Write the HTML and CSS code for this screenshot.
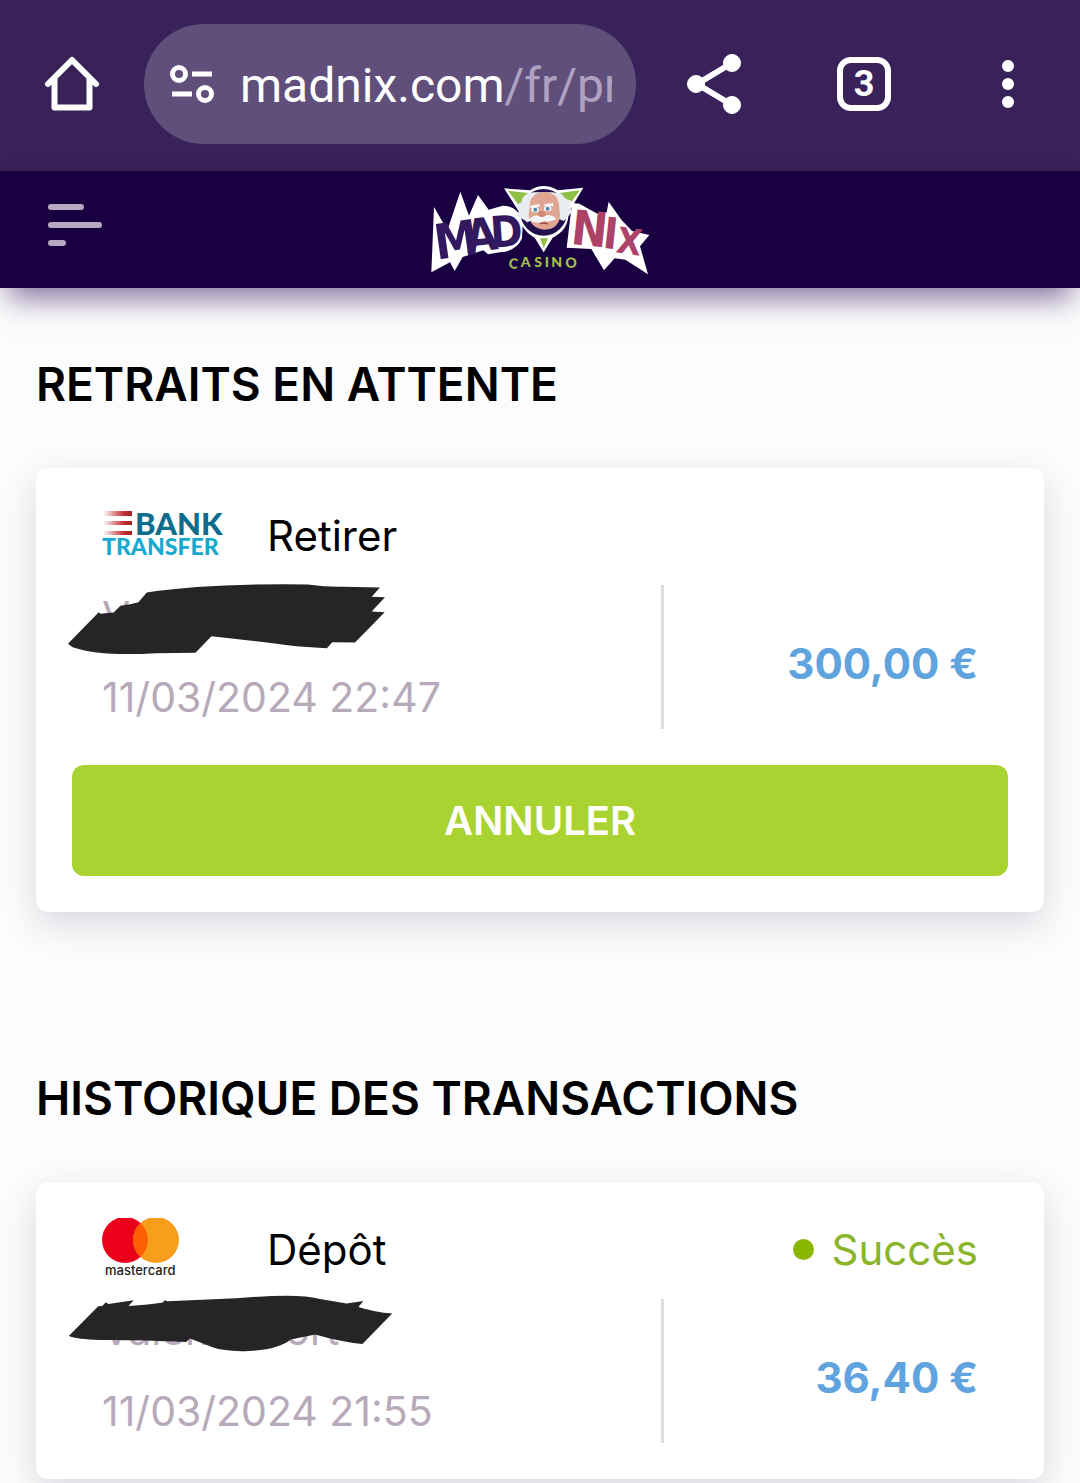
FILE: index.html
```html
<!DOCTYPE html>
<html lang="fr">
<head>
<meta charset="utf-8">
<meta name="viewport" content="width=device-width, initial-scale=1">
<title>Madnix Casino – Transactions</title>
<link rel="stylesheet" href="styles.css">
</head>
<body>
<div class="toolbar">
  <button class="tool home" type="button" aria-label="Accueil">
    <svg width="60" height="60" viewBox="0 0 60 60" fill="none" stroke="#fff" stroke-width="6" stroke-linejoin="round" stroke-linecap="round"><path d="M6 30 30 6l24 24M12.500 25v28.500h35V25"/></svg>
  </button>
  <button class="address" type="button">
    <svg class="tune" width="48" height="42" viewBox="0 0 48 42" fill="none" stroke="#fff" stroke-width="5"><circle cx="11" cy="11" r="6.500"/><path d="M24 11h20M4 31h20"/><circle cx="37" cy="31" r="6.500"/></svg>
    <span class="url">madnix.com<span class="path">/fr/pr</span></span>
  </button>
  <div class="actions">
    <button class="tool" type="button" aria-label="Partager">
      <svg width="60" height="60" viewBox="0 0 60 60" fill="#fff" stroke="#fff"><path d="M48 9 13 30l35 21" fill="none" stroke-width="6"/><circle cx="48" cy="9" r="8.500"/><circle cx="12" cy="30" r="8.500"/><circle cx="48" cy="51" r="8.500"/></svg>
    </button>
    <button class="tool" type="button" aria-label="Onglets ouverts"><span class="tabs">3</span></button>
    <button class="tool more" type="button" aria-label="Menu du navigateur">
      <svg width="12" height="48" viewBox="0 0 12 48" fill="#fff"><circle cx="6" cy="6" r="6"/><circle cx="6" cy="24" r="6"/><circle cx="6" cy="42" r="6"/></svg>
    </button>
  </div>
</div>

<header class="site-header">
  <button class="menu" type="button" aria-label="Menu"><span class="bar mid"></span><span class="bar"></span><span class="bar short"></span></button>
  <a class="logo" href="#" aria-label="Madnix Casino">
    <svg width="240" height="110" viewBox="0 0 720 330">
      <path fill="#fff" d="M42 96 82 166 121 50 147 122 174 60 206 104 248 92Q300 92 308 150L306 190Q290 228 240 232L204 238 190 226 128 246 104 288 90 262 34 292Z"/>
      <path fill="#fff" d="M440 218 456 84 478 86 532 116 560 112 566 80 604 134 636 168 688 180 660 214 684 298 616 254 584 250 552 286 514 222Z"/>
      <g class="logo-mad">
        <text x="50" y="254" font-size="146" transform="rotate(-8 50 254)">M</text>
        <text x="142" y="234" font-size="138" transform="rotate(-7 142 234)">A</text>
        <text x="214" y="218" font-size="130" transform="rotate(-4 214 218)">D</text>
      </g>
      <g class="logo-nix">
        <text x="450" y="206" font-size="144" transform="rotate(6 450 206)">N</text>
        <text x="546" y="218" font-size="130" transform="rotate(6 546 218)">I</text>
        <text x="586" y="232" font-size="108" transform="rotate(8 586 232)">X</text>
      </g>
      <path fill="#fff" d="M252 40 330 46Q370 20 414 46L490 38 446 112Q446 166 398 188L371 232 344 188Q298 164 298 112Z"/>
      <path fill="#8fbf45" d="M264 47 324 54 300 96ZM480 46 418 54 446 92ZM360 190H384L371 220Z"/>
      <circle cx="371" cy="112" r="70" fill="#22104e"/>
      <path fill="#e9edf2" d="M340 52Q304 56 304 82L286 92 298 106 290 122 308 132 322 142 344 132 410 130 432 138 446 122 456 110 448 96 456 78 438 72 424 56 398 52Z"/>
      <path fill="#e0a591" d="M330 80Q342 50 376 52 410 54 416 82L420 116Q420 162 374 164 330 162 326 118Z"/>
      <path fill="#f3f4f6" d="M326 134Q344 114 366 126 388 112 410 132 392 142 372 138 348 150 326 134ZM330 92 358 86 360 94 332 100ZM372 88 400 84 400 94 374 94Z"/>
      <ellipse cx="345" cy="104" rx="11" ry="8" fill="#fff"/><circle cx="346" cy="104" r="6" fill="#4b86ba"/>
      <ellipse cx="383" cy="101" rx="11" ry="8" fill="#fff"/><circle cx="383" cy="101" r="6" fill="#4b86ba"/>
      <ellipse cx="366" cy="117" rx="11" ry="9" fill="#cf8474"/>
      <path d="M360 147q12-5 24 0" fill="none" stroke="#8d3e42" stroke-width="4"/>
      <g class="logo-casino">
        <text x="265" y="279" transform="rotate(6 265 279)">C</text><text x="302" y="277">A</text><text x="343" y="276">S</text><text x="374" y="276">I</text><text x="394" y="277">N</text><text x="438" y="280" transform="rotate(-6 438 280)">O</text>
      </g>
    </svg>
  </a>
</header>

<main class="content">
  <section>
    <h2>Retraits en attente</h2>
    <article class="card">
      <div class="summary">
        <svg class="brand" width="120" height="50" viewBox="0 0 120 50" role="img" aria-label="Bank Transfer">
          <defs><linearGradient id="stripe"><stop stop-color="#c4343a" stop-opacity="0"/><stop offset=".7" stop-color="#c4343a"/><stop offset="1" stop-color="#a81f28"/></linearGradient></defs>
          <path fill="url(#stripe)" d="M1 0h29v5H1zM1 10h29v4H1zM1 20h29v4H1z"/>
          <text class="bank" x="33" y="24">BANK</text><text class="transfer" x="0" y="44">TRANSFER</text>
        </svg>
        <span class="kind">Retirer</span>
      </div>
      <div class="details">
        <div class="who"><p class="name">V</p><p><time datetime="2024-03-11T22:47">11/03/2024 22:47</time></p>
          <svg class="redact first" width="317" height="72" viewBox="26 280 950 215"><path fill="#252525" d="M26 462 118 367 123 372 163 368 183 348Q215 343 237 337L262 308Q450 280 745 284 800 292 850 291L961 293 936 321 976 322 936 365 975 367 886 458 818 457 802 475Q700 470 640 460L456 439 408 489 290 490Q120 500 40 472Z"/></svg>
        </div>
        <div class="amount">300,00 €</div>
      </div>
      <button class="cancel" type="button">Annuler</button>
    </article>
  </section>

  <section>
    <h2>Historique des transactions</h2>
    <article class="card">
      <div class="summary">
        <svg class="brand" width="120" height="63" viewBox="0 0 120 63" role="img" aria-label="Mastercard">
          <clipPath id="circles"><path d="M0 0h120v50H0z"/></clipPath>
          <g clip-path="url(#circles)"><circle cx="23" cy="22" r="23" fill="#eb001b"/><circle cx="54" cy="22" r="23" fill="#f79e1b"/><path fill="#ff5f00" d="M38.500 5a23 23 0 0 1 0 34 23 23 0 0 1 0-34Z"/></g>
          <text class="mastercard" x="3" y="57">mastercard</text>
        </svg>
        <span class="kind">Dépôt</span>
        <span class="status">Succès</span>
      </div>
      <div class="details">
        <div class="who"><p class="name"><span>Valen</span><span>ort</span></p><p><time datetime="2024-03-11T21:55">11/03/2024 21:55</time></p>
          <svg class="redact second" width="325" height="57" viewBox="26 284 976 172"><path fill="#252525" d="M26 408 115 318 127 317 138 306 145 311 222 300 206 317Q270 314 310 307L315 300 324 303Q430 298 530 294 720 278 780 295L864 310 915 302 900 320Q950 336 1002 340L912 432Q840 424 770 403L696 418Q660 448 570 453 500 456 460 442L392 415 380 426Q200 418 120 420 50 418 26 408Z"/></svg>
        </div>
        <div class="amount">36,40 €</div>
      </div>
    </article>
  </section>
</main>
</body>
</html>
```
FILE: styles.css
```css
* { box-sizing: border-box; }

body {
  margin: 0;
  background: #fcfcfc;
  color: #000;
  font: 42px/63px Inter, "Liberation Sans", sans-serif;
}

h2, p { margin: 0; }

button {
  margin: 0;
  padding: 0;
  border: 0;
  background: none;
  color: inherit;
  font: inherit;
  cursor: pointer;
}

svg { display: block; flex: none; overflow: visible; }

/* Browser toolbar */
.toolbar {
  display: flex;
  align-items: center;
  padding: 24px 0 27px;
  background: #382259;
  color: #fff;
}

.tool {
  display: flex;
  align-items: center;
  justify-content: center;
  flex: none;
  width: 144px;
  height: 120px;
}

.tool.more { width: 132px; }

.address {
  display: flex;
  align-items: center;
  gap: 24px;
  flex: 1;
  min-width: 0;
  height: 120px;
  padding: 0 24px;
  border-radius: 60px;
  background: #604f7a;
}

.url {
  flex: 1;
  min-width: 0;
  padding-top: 4px;
  overflow: hidden;
  white-space: nowrap;
  text-align: left;
  font: 48px/60px Roboto, sans-serif;
}

.path { color: #aea2c0; }

.actions { display: flex; gap: 6px; padding: 0 6px; }

.tabs {
  width: 54px;
  height: 54px;
  border: 6px solid #fff;
  border-radius: 14px;
  font: 700 36px/42px Roboto, sans-serif;
}

/* Site header */
.site-header {
  position: relative;
  display: grid;
  grid-template-columns: 1fr auto 1fr;
  align-items: center;
  height: 117px;
  padding: 0 48px;
  background: #190041;
  box-shadow: 0 18px 28px -8px rgba(50, 20, 95, .6);
}

.menu {
  display: flex;
  flex-direction: column;
  gap: 12px;
  width: 54px;
  padding-bottom: 9px;
}

.bar { width: 54px; height: 6px; border-radius: 3px; background: #b7a8c3; }
.bar.mid { width: 36px; }
.bar.short { width: 18px; }

.logo-mad, .logo-nix { font-family: "DejaVu Sans Condensed", "DejaVu Sans", sans-serif; font-weight: 700; }
.logo-mad { fill: #32185f; }
.logo-nix { fill: #ad4268; }
.logo-casino { fill: #a5c34a; font: 900 42px Lato, sans-serif; }

/* Transactions */
.content {
  display: grid;
  gap: 150px;
  padding: 60px 36px 4px;
}

h2 {
  margin-bottom: 48px;
  font-size: 46px;
  line-height: 72px;
  font-weight: 600;
  text-transform: uppercase;
}

.card {
  padding: 36px;
  border-radius: 12px;
  background: #fff;
  box-shadow: 0 12px 36px rgba(25, 0, 65, .15);
}

.summary {
  display: flex;
  align-items: center;
  gap: 45px;
  height: 63px;
  margin-bottom: 18px;
  padding: 0 30px;
}

.status {
  display: flex;
  align-items: center;
  gap: 18px;
  margin-left: auto;
  color: #8ab42a;
}

.status::before {
  content: "";
  width: 21px;
  height: 21px;
  border-radius: 50%;
  background: #8ab800;
}

.details {
  display: grid;
  grid-template-columns: 172fr 100fr;
}

.who {
  position: relative;
  display: grid;
  gap: 18px;
  padding-left: 30px;
  border-right: 3px solid #dddde0;
  color: #b6aaba;
  font-size: 41px;
}

.name { display: flex; gap: 76px; }

.redact { position: absolute; }
.redact.first { left: -4px; top: -2px; }
.redact.second { left: -4px; top: -4px; }

.amount {
  align-self: center;
  padding: 12px 30px 0 0;
  color: #5fa3df;
  font-weight: 700;
  text-align: right;
}

.cancel {
  width: 100%;
  margin-top: 36px;
  padding: 24px;
  border-radius: 12px;
  background: #a8d330;
  color: #fff;
  font-size: 40px;
  font-weight: 600;
  text-transform: uppercase;
}

.bank, .transfer { font-family: Lato, sans-serif; font-weight: 900; }
.bank { fill: #0c6d8c; font-size: 31px; }
.transfer { fill: #17a9cf; font-size: 23px; }
.mastercard { fill: #222; font: 500 13px Inter, sans-serif; }
```
